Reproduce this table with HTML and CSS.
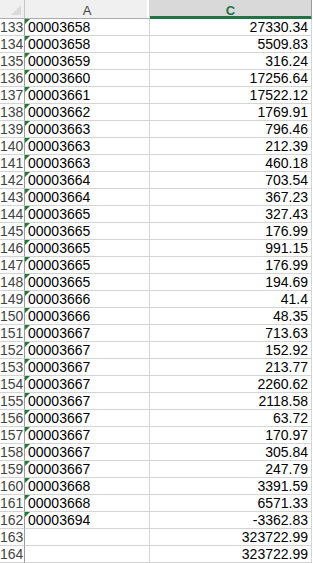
FILE: index.html
```html
<!DOCTYPE html>
<html>
<head>
<meta charset="utf-8">
<link rel="stylesheet" href="styles.css">
</head>
<body>
<div class="sheet" id="sheet">
  <div class="corner"><span class="corner-tri"></span></div>
  <div class="colhead">A</div>
  <div class="colhead sel">C</div>
</div>
<script>
const data = [
["00003658","27330.34"],["00003658","5509.83"],["00003659","316.24"],["00003660","17256.64"],
["00003661","17522.12"],["00003662","1769.91"],["00003663","796.46"],["00003663","212.39"],
["00003663","460.18"],["00003664","703.54"],["00003664","367.23"],["00003665","327.43"],
["00003665","176.99"],["00003665","991.15"],["00003665","176.99"],["00003665","194.69"],
["00003666","41.4"],["00003666","48.35"],["00003667","713.63"],["00003667","152.92"],
["00003667","213.77"],["00003667","2260.62"],["00003667","2118.58"],["00003667","63.72"],
["00003667","170.97"],["00003667","305.84"],["00003667","247.79"],["00003668","3391.59"],
["00003668","6571.33"],["00003694","-3362.83"],["","323722.99"],["","323722.99"]
];
const sheet = document.getElementById('sheet');
data.forEach((r, i) => {
  const n = document.createElement('div'); n.className = 'rownum'; n.textContent = 133 + i;
  const a = document.createElement('div'); a.className = 'cell txt';
  if (r[0]) { const t = document.createElement('span'); t.className = 'flag'; a.appendChild(t); a.appendChild(document.createTextNode(r[0])); }
  const c = document.createElement('div'); c.className = 'cell num'; c.textContent = r[1];
  sheet.append(n, a, c);
});
</script>
</body>
</html>
```
FILE: styles.css
```css
html, body { margin: 0; padding: 0; background: #fff; }
body { width: 313px; height: 563px; overflow: hidden; }
.sheet {
  display: grid;
  grid-template-columns: 25px 125px 162px;
  grid-template-rows: 19px;
  grid-auto-rows: 17px;
  font-family: "Liberation Sans Narrow", "Arial Narrow", "Liberation Sans", sans-serif;
  font-size: 14px;
  color: #000;
}
.corner {
  position: relative;
  background: #f0f0f0;
  border-right: 1px solid #c6c6c6;
  border-bottom: 1px solid #ababab;
  box-sizing: border-box;
}
.corner-tri {
  position: absolute;
  right: 3px;
  bottom: 3px;
  width: 0; height: 0;
  border-left: 10px solid transparent;
  border-bottom: 10px solid #dadada;
}
.colhead {
  background: #f0f0f0;
  border-right: 1px solid #d4d4d4;
  box-shadow: inset -2px 0 0 #fff;
  border-bottom: 1px solid #ababab;
  box-sizing: border-box;
  text-align: center;
  line-height: 21px;
  font-family: "Liberation Sans", Arial, sans-serif;
  font-size: 13px;
  color: #444;
}
.colhead.sel {
  background: #d9d9d9;
  color: #217346;
  box-shadow: inset 0 -2px 0 #217346;
  border-right: 1px solid #9b9b9b;
  border-bottom: 1px solid #217346;
  font-weight: bold;
}
.rownum {
  border-right: 1px solid #9b9b9b;
  border-bottom: 1px solid #d4d4d4;
  box-sizing: border-box;
  text-align: right;
  padding-right: 2px;
  line-height: 17px;
  font-size: 14px;
  color: #444;
  background: #fff;
}
.cell {
  border-right: 1px solid #d4d4d4;
  border-bottom: 1px solid #d4d4d4;
  box-sizing: border-box;
  line-height: 17px;
  white-space: nowrap;
  overflow: hidden;
}
.txt { position: relative; padding-left: 3px; }
.num { text-align: right; padding-right: 3px; }
.flag {
  position: absolute;
  left: 0; top: 0;
  width: 0; height: 0;
  border-top: 5px solid #1e7b34;
  border-right: 5px solid transparent;
}
```
